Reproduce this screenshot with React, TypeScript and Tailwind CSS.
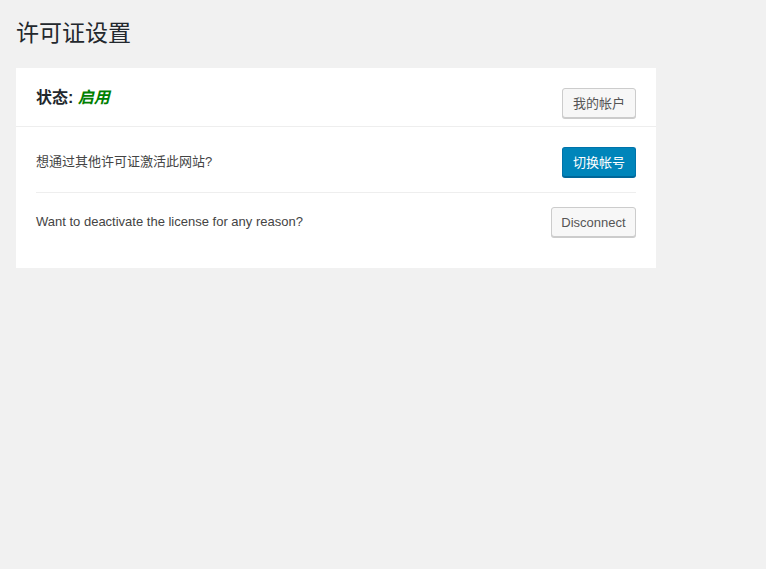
import React from 'react';

const font = "font-['Liberation_Sans','Noto_Sans_CJK_SC',sans-serif]";

const btnBase =
  'inline-flex h-[30px] items-center justify-center rounded-[3px] border text-[13px] leading-none whitespace-nowrap';

const App: React.FC = () => {
  return (
    <div className={`min-h-[569px] bg-[#f1f1f1] ${font} text-[#444]`}>
      <div className="w-[640px] pl-[16px] pt-[18px]">
        <h1 className="text-[23px] leading-[27px] font-normal text-[#23282d] font-['Noto_Sans_CJK_SC',sans-serif]">
          许可证设置
        </h1>
      </div>

      <div className="mx-[16px] mt-[23px] w-[640px] bg-white pb-[11px]">
        {/* header */}
        <div className="flex items-start justify-between border-b border-[#eee] px-[20px] pt-[20px] pb-[8px]">
          <h3 className="text-[16px] leading-[20px] font-bold text-[#23282d]">
            状态: <em className="text-[#008000]">启用</em>
          </h3>
          <button
            className={`${btnBase} w-[74px] border-[#ccc] bg-[#f7f7f7] text-[#555] shadow-[0_1px_0_#ccc]`}
          >
            我的帐户
          </button>
        </div>

        {/* rows */}
        <div className="px-[20px]">
          <div className="flex items-center justify-between border-b border-[#eee] pt-[20px] pb-[15px]">
            <p className="text-[13px]">想通过其他许可证激活此网站?</p>
            <button
              className={`${btnBase} w-[74px] border-[#0073aa] border-b-[#006799] bg-[#0085ba] text-white shadow-[0_1px_0_#006799]`}
            >
              切换帐号
            </button>
          </div>
          <div className="flex items-center justify-between pt-[14px] pb-[20px]">
            <p className="text-[13px]">Want to deactivate the license for any reason?</p>
            <button
              className={`${btnBase} w-[85px] border-[#ccc] bg-[#f7f7f7] text-[#555] shadow-[0_1px_0_#ccc]`}
            >
              Disconnect
            </button>
          </div>
        </div>
      </div>
    </div>
  );
};

export default App;
